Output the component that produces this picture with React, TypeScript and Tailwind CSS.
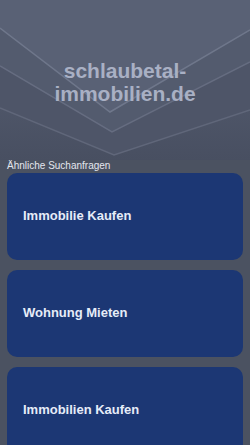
const searches = ['Immobilie Kaufen', 'Wohnung Mieten', 'Immobilien Kaufen'];

function HeaderArt() {
  return (
    <svg className="absolute inset-0 h-full w-full" viewBox="0 0 250 160" preserveAspectRatio="none">
      <defs>
        <linearGradient id="bg" x1="0" y1="0" x2="0" y2="1">
          <stop offset="0" stopColor="#5a6276" />
          <stop offset="1" stopColor="#484f61" />
        </linearGradient>
      </defs>
      <rect width="250" height="160" fill="url(#bg)" />
      <polygon points="0,0 250,0 250,30 110,112 0,28" fill="#596175" />
      <polygon points="0,28 110,112 250,30 250,62 112,132 0,66" fill="#535b6e" />
      <polygon points="0,66 112,132 250,62 250,110 114,155 0,108" fill="#4e5568" />
      <polyline points="0,28 110,112 250,30" fill="none" stroke="#6f778b" strokeWidth="1.5" />
      <polyline points="0,66 112,132 250,62" fill="none" stroke="#666d81" strokeWidth="1.5" />
      <polyline points="0,108 114,155 250,110" fill="none" stroke="#60677a" strokeWidth="1.5" />
    </svg>
  );
}

export default function App() {
  return (
    <div className="min-h-[445px] w-[250px] overflow-hidden bg-[#4b5261] font-['Liberation_Sans',Arial,sans-serif]">
      <header className="relative flex h-[160px] items-center justify-center">
        <HeaderArt />
        <h1 className="relative mt-[3px] text-center text-[21px] font-bold leading-[23px] text-[#a9b0c4]">
          schlaubetal-
          <br />
          immobilien.de
        </h1>
      </header>
      <p className="px-[7px] text-[10px] leading-[12px] text-[#e3e6ee]">Ähnliche Suchanfragen</p>
      <div className="mt-[1px] flex flex-col gap-[10px] px-[7px]">
        {searches.map((s) => (
          <div key={s} className="flex h-[87px] items-center rounded-[10px] bg-[#1c3774] px-[16px]">
            <span className="-mt-[1px] text-[13px] font-bold text-[#e6ecf8]">{s}</span>
          </div>
        ))}
      </div>
    </div>
  );
}
